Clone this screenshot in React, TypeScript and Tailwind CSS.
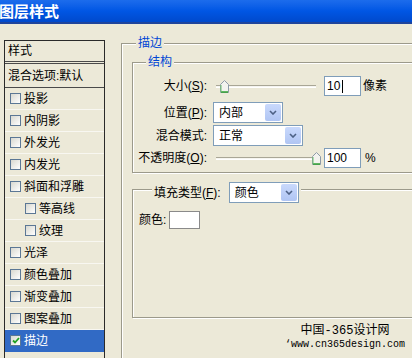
const ui = "font-['Liberation_Sans','Noto_Sans_CJK_SC',sans-serif] text-[12px] leading-[16px] text-black";
const etched = 'border border-[#9c9a8b] shadow-[inset_1px_1px_0_#ffffff,1px_1px_0_#ffffff]';

const Check = ({ checked }: { checked?: boolean }) => (
  <span className="w-[11px] h-[11px] shrink-0 border border-[#5b7795] bg-gradient-to-br from-[#d8d8d0] to-white flex items-center justify-center">
    {checked && (
      <svg width="8" height="7" viewBox="0 0 8 7">
        <path d="M1 3.5 L3 5.5 L7 1" fill="none" stroke="#21a121" strokeWidth="1.8" />
      </svg>
    )}
  </span>
);

const Row = ({ label, sub, checked }: { label: string; sub?: boolean; checked?: boolean }) => (
  <div
    className={
      'h-[22px] flex items-center gap-[3px] border-b ' +
      (sub ? 'pl-[20px] ' : 'pl-[5px] ') +
      (checked ? 'bg-[#316ac5] text-white border-[#316ac5]' : 'border-[#f8f7f1]')
    }
  >
    <Check checked={checked} />
    <span>{label}</span>
  </div>
);

const Combo = ({ text, className }: { text: string; className: string }) => (
  <div className={'h-[21px] border border-[#7f9db9] bg-white flex items-center shrink-0 ' + className}>
    <span className="flex-1 pl-[5px]">{text}</span>
    <span className="w-[16px] h-[17px] mr-px rounded-[2px] bg-gradient-to-b from-[#c9d9fc] to-[#b0c5f3] flex items-center justify-center">
      <svg width="8" height="5" viewBox="0 0 8 5">
        <path d="M1 1 L4 4 L7 1" fill="none" stroke="#4d6185" strokeWidth="1.6" />
      </svg>
    </span>
  </div>
);

const Slider = ({ at }: { at: 'start' | 'end' }) => (
  <div className="relative w-[106px] h-[20px] ml-[8px] shrink-0 flex items-center">
    <div className="w-[100px] ml-px h-[3px] border-t border-[#a9a696] bg-[#f6f5f0] border-b border-b-white" />
    <svg
      className={'absolute top-[4px] ' + (at === 'start' ? 'left-[5px]' : 'left-[97px]')}
      width="9"
      height="13"
      viewBox="0 0 9 13"
    >
      <path d="M0.5 4.5 L4.5 0.5 L8.5 4.5 V12.5 H0.5 Z" fill="#f3f3ef" stroke="#8d9aa8" />
      <path d="M1 12 H8" stroke="#2fa12f" strokeWidth="1.5" />
      <path d="M1 5 V12" stroke="#6fc26f" strokeWidth="1" />
    </svg>
  </div>
);

const Input = ({ value, caret }: { value: string; caret?: boolean }) => (
  <div className="ml-[3px] w-[37px] h-[20px] border border-[#7f9db9] bg-white flex items-center pl-[2px] shrink-0">
    <span>{value}</span>
    {caret && <span className="w-px h-[13px] bg-black ml-[2px]" />}
  </div>
);

export default function App() {
  return (
    <div className={'relative w-[412px] h-[358px] overflow-hidden bg-[#ece9d8] ' + ui}>
      <div className="h-[24px] bg-gradient-to-b from-[#1c6cec] via-[#0056e4] to-[#0049cc] border-b-2 border-[#1e449c] flex items-center">
        <span className="-ml-[1px] text-white font-bold text-[15px] font-['Noto_Sans_CJK_SC',sans-serif]">
          图层样式
        </span>
      </div>

      <div className="flex h-[334px]">
        <div className="ml-[4px] mt-[16px] w-[101px] h-[330px] shrink-0 border border-[#2a2a2a] border-b-0">
          <div className="h-[20px] flex items-center pl-[3px]">样式</div>
          <div className="h-[3px] border-y border-[#4a4a4a]" />
          <div className="h-[24px] flex items-center pl-[3px] border-b border-[#4a4a4a]">混合选项:默认</div>
          <Row label="投影" />
          <Row label="内阴影" />
          <Row label="外发光" />
          <Row label="内发光" />
          <Row label="斜面和浮雕" />
          <Row label="等高线" sub />
          <Row label="纹理" sub />
          <Row label="光泽" />
          <Row label="颜色叠加" />
          <Row label="渐变叠加" />
          <Row label="图案叠加" />
          <Row label="描边" checked />
        </div>

        <fieldset className={'ml-[16px] mt-[11px] w-[330px] h-[400px] shrink-0 ' + etched}>
          <legend className="ml-[14px] px-[2px] bg-[#ece9d8] text-[#0046d5]">描边</legend>

          <fieldset className={'ml-[10px] mt-[3px] w-[310px] pb-[4px] ' + etched}>
            <legend className="ml-[13px] px-[2px] bg-[#ece9d8] text-[#0046d5]">结构</legend>

            <div className="mt-[6px] h-[20px] flex items-center">
              <span className="w-[74px] text-right">
                大小(<u>S</u>):
              </span>
              <Slider at="start" />
              <Input value="10" caret />
              <span className="ml-[2px]">像素</span>
            </div>

            <div className="mt-[6px] h-[21px] flex items-center">
              <span className="w-[74px] text-right">
                位置(<u>P</u>):
              </span>
              <Combo text="内部" className="ml-[6px] w-[70px]" />
            </div>

            <div className="mt-[2px] h-[21px] flex items-center">
              <span className="w-[74px] text-right">混合模式:</span>
              <Combo text="正常" className="ml-[6px] w-[90px]" />
            </div>

            <div className="mt-[2px] h-[20px] flex items-center">
              <span className="w-[74px] text-right whitespace-nowrap">
                不透明度(<u>O</u>):
              </span>
              <Slider at="end" />
              <Input value="100" />
              <span className="ml-[4px]">%</span>
            </div>
          </fieldset>

          <div className={'ml-[10px] mt-[16px] w-[310px] h-[129px] ' + etched}>
            <div className="-mt-[8px] ml-[19px] w-fit px-[2px] h-[21px] bg-[#ece9d8] flex items-center gap-[8px]">
              <span>
                填充类型(<u>F</u>):
              </span>
              <Combo text="颜色" className="w-[70px]" />
            </div>
            <div className="mt-[8px] ml-[6px] h-[18px] flex items-center gap-[3px]">
              <span>颜色:</span>
              <span className="w-[31px] h-[18px] border border-[#8a8a8a] bg-white" />
            </div>
          </div>
        </fieldset>
      </div>

      <div className="absolute left-[285px] top-[324px] flex flex-col items-center font-['Liberation_Mono','Noto_Sans_CJK_SC',monospace] text-black">
        <span className="text-[12px] leading-[14px]">中国-365设计网</span>
        <span className="text-[10px] leading-[13px]">‘www.cn365design.com</span>
      </div>
    </div>
  );
}
